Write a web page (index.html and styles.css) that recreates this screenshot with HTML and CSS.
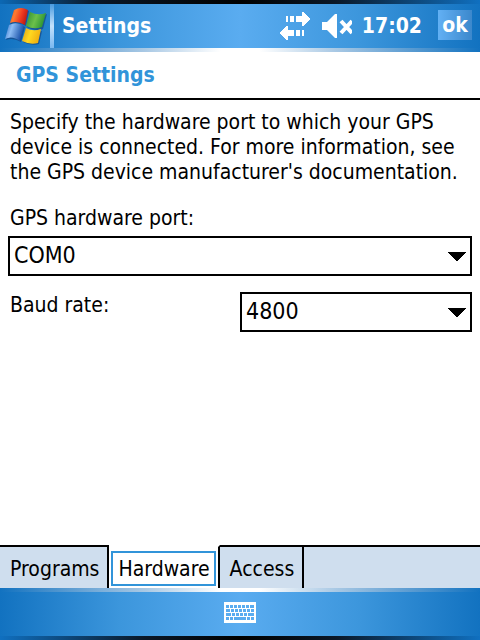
FILE: index.html
```html
<!DOCTYPE html>
<html lang="en">
<head>
    <meta charset="UTF-8">
    <meta name="viewport" content="width=device-width, initial-scale=1.0">
    <title>GPS Settings</title>
    <link rel="stylesheet" href="styles.css">
</head>
<body>

    <header class="bar title-bar">
        <button type="button" class="start" aria-label="Start">
            <svg width="42" height="38" viewBox="0 0 42 38">
                <defs>
                    <linearGradient id="red" x1="0" y1="0" x2="1" y2="0.3">
                        <stop offset="0" stop-color="#e05a20"/><stop offset="0.35" stop-color="#ff7a30"/><stop offset="0.7" stop-color="#ee3a20"/><stop offset="1" stop-color="#c01c14"/>
                    </linearGradient>
                    <linearGradient id="green" x1="0" y1="0" x2="1" y2="0.3">
                        <stop offset="0" stop-color="#2c8a30"/><stop offset="0.55" stop-color="#6cc04a"/><stop offset="1" stop-color="#2c9434"/>
                    </linearGradient>
                    <linearGradient id="blue" x1="0" y1="0" x2="1" y2="0.3">
                        <stop offset="0" stop-color="#2a6cc4"/><stop offset="0.4" stop-color="#8cbcf4"/><stop offset="1" stop-color="#1850a8"/>
                    </linearGradient>
                    <linearGradient id="yellow" x1="0" y1="0" x2="1" y2="0.3">
                        <stop offset="0" stop-color="#d89c18"/><stop offset="0.5" stop-color="#ffd820"/><stop offset="1" stop-color="#f0b010"/>
                    </linearGradient>
                </defs>
                <g class="flag-shadow">
                    <path d="M9 4 Q16 0 24 4 L21 19 Q13 14 5 18 Z"/>
                    <path d="M26 7 Q33 11 42 7 L38 22 Q30 25 22 20 Z"/>
                    <path d="M5 20 Q12 16 20 20 L16 35 Q8 30 1 33 Z"/>
                    <path d="M21 23 Q28 27 37 24 L34 37 Q26 39 18 35 Z"/>
                </g>
                <path fill="url(#red)" d="M9 3 Q16 -1 23 3 L20 18 Q12 13 5 16 Z"/>
                <path fill="url(#green)" d="M25 5 Q33 9 41 6 L37 20 Q29 23 21 19 Z"/>
                <path fill="url(#blue)" d="M4 18 Q11 14 19 19 L15 34 Q7 28 0 32 Z"/>
                <path fill="url(#yellow)" d="M21 21 Q28 25 36 22 L33 36 Q25 38 17 34 Z"/>
            </svg>
        </button>
        <span class="app-name">Settings</span>
        <div class="tray">
            <svg class="tray-icon" width="30" height="28" viewBox="0 0 30 28" shape-rendering="crispEdges">
                <path d="M6 4h2v6H6zM10 4h4v6h-4zM16 4h6V0h2l6 7-6 7h-2v-4h-6z"/>
                <path d="M24 18h-2v6h2zM20 18h-4v6h4zM14 18H8v-4H6l-6 7 6 7h2v-4h6z"/>
            </svg>
            <svg class="tray-icon" width="32" height="24" viewBox="0 0 32 24">
                <path d="M2 8h5l8-8h2v24h-2l-8-8H2z"/>
                <path class="mute" d="M21 7l11 12M32 7L21 19"/>
            </svg>
            <span class="clock">17:02</span>
            <button type="button" class="ok">ok</button>
        </div>
    </header>

    <h1>GPS Settings</h1>

    <main class="content">
        <p>Specify the hardware port to which your GPS device is connected. For more information, see the GPS device manufacturer's documentation.</p>

        <div class="field">
            <label for="port">GPS hardware port:</label>
            <select id="port">
                <option>COM0</option>
            </select>
        </div>

        <div class="field field-row">
            <label for="baud">Baud rate:</label>
            <select id="baud">
                <option>4800</option>
            </select>
        </div>
    </main>

    <nav class="tabs">
        <button type="button" class="tab">Programs</button>
        <button type="button" class="tab active"><span>Hardware</span></button>
        <button type="button" class="tab">Access</button>
        <div class="tab-fill"></div>
    </nav>

    <footer class="bar bottom-bar">
        <button type="button" class="keyboard" aria-label="Keyboard">
            <svg width="32" height="21" viewBox="0 0 32 21" shape-rendering="crispEdges">
                <rect class="keys-case" width="32" height="21" rx="1"/>
                <path class="keys" d="M2 3h3v3H2zM6 3h3v3H6zM10 3h3v3h-3zM14 3h3v3h-3zM18 3h3v3h-3zM22 3h3v3h-3zM26 3h4v3h-4z"/>
                <path class="keys" d="M2 7h4v3H2zM7 7h3v3H7zM11 7h3v3h-3zM15 7h3v3h-3zM19 7h3v3h-3zM23 7h3v3h-3zM27 7h3v3h-3z"/>
                <path class="keys" d="M2 11h5v3H2zM8 11h3v3H8zM12 11h3v3h-3zM16 11h3v3h-3zM20 11h3v3h-3zM24 11h6v3h-6z"/>
                <path class="keys" d="M2 15h3v3H2zM6 15h3v3H6zM10 15h12v3H10zM23 15h3v3h-3zM27 15h3v3h-3z"/>
            </svg>
        </button>
    </footer>

</body>
</html>
```

FILE: styles.css
```css
* {
    box-sizing: border-box;
}
body {
    margin: 0;
    min-height: 100vh;
    display: flex;
    flex-direction: column;
    background-color: #fff;
    color: #000;
    font-family: "DejaVu Sans Condensed", Tahoma, "DejaVu Sans", sans-serif;
    font-size: 21px;
    line-height: 25px;
}
button, select {
    font: inherit;
    color: inherit;
    margin: 0;
    padding: 0;
    border: none;
    border-radius: 0;
    background: none;
}
svg {
    display: block;
}
.bar {
    height: 52px;
    padding: 4px 0;
    display: flex;
    align-items: center;
}
.title-bar {
    background:
        linear-gradient(to right, #0c68b4, #0a1828 20%, #000 50%, #0a1828 70%, #1070c0) top / 100% 4px no-repeat,
        linear-gradient(to right, #1272c0, #a8c8e4 30%, #fff 46%, #fff 54%, #a8c8e4 70%, #1272c0) bottom / 100% 4px no-repeat,
        linear-gradient(to right, #1272c0, #3c96dc 25%, #5aacf0 50%, #3c96dc 75%, #1272c0);
    color: #fff;
    font-weight: bold;
}
.start {
    height: 44px;
    padding: 0 3px 0 5px;
    background: linear-gradient(#4a9ce0, #c4e2fc 50%, #7ab8f0) right / 4px 100% no-repeat;
    padding-right: 7px;
}
.flag-shadow {
    fill: #123c78;
    opacity: 0.6;
}
.app-name {
    flex: 1;
    padding-left: 8px;
}
.tray {
    display: flex;
    align-items: center;
    gap: 10px;
    padding-right: 8px;
}
.tray-icon {
    fill: #fff;
}
.mute {
    stroke: #fff;
    stroke-width: 4;
}
.ok {
    width: 34px;
    height: 30px;
    margin: 0 0 2px 6px;
    background: linear-gradient(to right, #62b0f4, #3c88cc);
    font-size: 21px;
}
h1 {
    margin: 0;
    padding: 11px 16px 10px;
    border-bottom: 2px solid #000;
    color: #3194d9;
    font-size: 21px;
}
.content {
    flex: 1;
    padding: 10px 8px;
}
p {
    margin: 0;
    padding: 0 2px;
}
label {
    display: block;
    padding: 1px 2px 0;
}
.field {
    margin-top: 20px;
}
.field select {
    display: block;
    width: 100%;
    height: 40px;
    margin-top: 5px;
    padding: 0 28px 2px 4px;
    appearance: none;
    border: 2px solid #000;
    background: conic-gradient(from -45deg at 50% 100%, #000 90deg, transparent 0) right 4px top 14px / 18px 9px no-repeat #fff;
    font-size: 23px;
}
.field-row {
    display: flex;
    justify-content: space-between;
    margin-top: 16px;
}
.field-row select {
    width: 50%;
    margin-top: 0;
}
.tabs {
    display: flex;
    height: 43px;
}
.tab {
    padding: 3px 8px 0 10px;
    border-top: 2px solid #000;
    border-right: 2px solid #000;
    background-color: #cfdeee;
}
.tab.active {
    padding: 2px 2px 0;
    border-top-color: #fff;
    background-color: #fff;
}
.tab.active span {
    display: block;
    padding: 4px 4px 2px 5px;
    border: 2px solid #3194d9;
}
.tab-fill {
    flex: 1;
    border-top: 2px solid #000;
    background-color: #cfdeee;
}
.bottom-bar {
    padding-bottom: 8px;
    justify-content: center;
    background:
        linear-gradient(to right, #1272c0, #a8c8e4 30%, #fff 46%, #fff 54%, #a8c8e4 70%, #1272c0) top / 100% 4px no-repeat,
        linear-gradient(to right, #1070c0, #0a1828 30%, #000 50%, #0a1828 70%, #1070c0) bottom / 100% 4px no-repeat,
        linear-gradient(to right, #1272c0, #3c96dc 25%, #5aacf0 50%, #3c96dc 75%, #1272c0);
}
.keys-case {
    fill: #fff;
}
.keys {
    fill: #5aacf0;
}
```
